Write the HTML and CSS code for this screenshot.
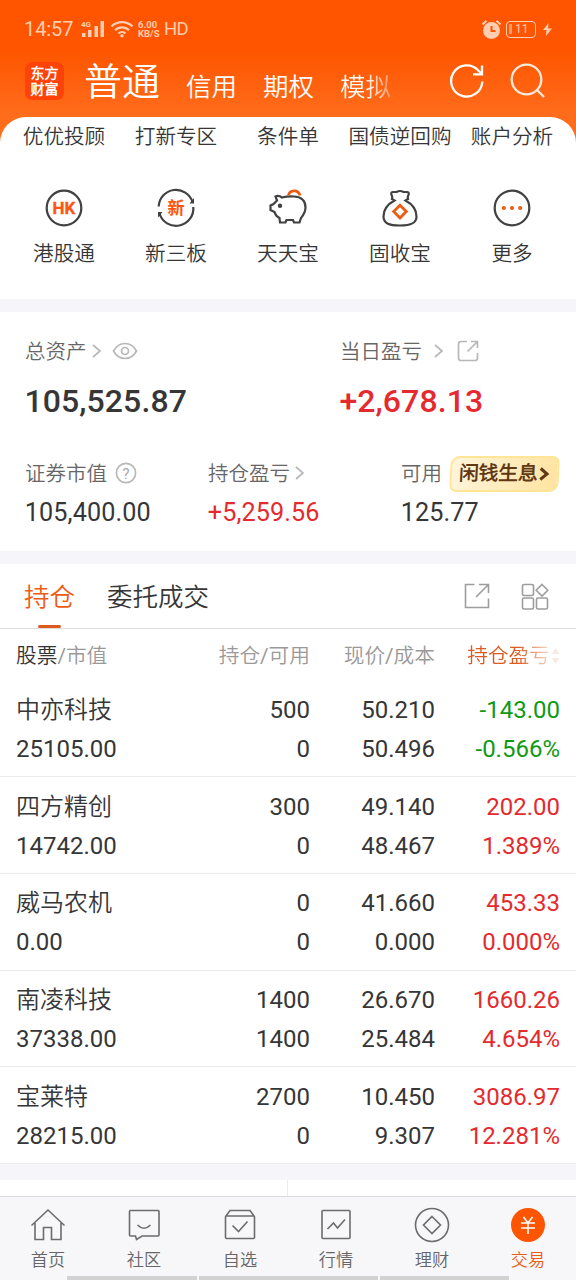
FILE: index.html
```html
<!DOCTYPE html>
<html lang="zh-CN">
<head>
<meta charset="utf-8">
<title>交易</title>
<link rel="stylesheet" href="styles.css">
</head>
<body>
<div class="app">
  <header class="top">
    <div class="status">
      <span class="time">14:57</span>
      <svg class="signal" width="24" height="18" viewBox="0 0 24 18"><text x="0" y="7" class="sig-text">4G</text><path d="M1 13h3.500v4H1zM7 10h3.500v7H7zM13.500 6H17v11h-3.500zM19.500 1H23v16h-3.500z"/></svg>
      <svg class="wifi" width="24" height="18" viewBox="0 0 24 18"><path d="M1.500 6.500a15 15 0 0 1 21 0M5 10.200a10 10 0 0 1 14 0M8.500 13.500a5 5 0 0 1 7 0"/><circle cx="12" cy="15.800" r="1.700"/></svg>
      <span class="speed"><b>6.00</b><b>KB/S</b></span>
      <span class="hd">HD</span>
      <svg class="alarm" width="21" height="21" viewBox="0 0 21 21"><circle cx="10.500" cy="11.500" r="8.500"/><path d="M1.500 5.500 5.500 1.800M19.500 5.500 15.500 1.800" class="ear"/><path d="M10.500 7v5h4" class="hand"/></svg>
      <span class="battery"><i></i>11</span>
      <svg class="bolt" width="9" height="13" viewBox="0 0 9 13"><path d="M5.500 0 0 7h3.500L3 13l6-7.500H5z"/></svg>
    </div>
    <nav class="accounts">
      <span class="logo"><span>东方</span><span>财富</span></span>
      <span class="acct current">普通</span>
      <span class="acct">信用</span>
      <span class="acct">期权</span>
      <span class="acct faded">模拟</span>
      <svg class="refresh" width="36" height="36" viewBox="0 0 36 36"><path d="M33.300 18.500A15.600 15.600 0 1 1 29.300 7.500L33 11M33 2.500V11.300H24"/></svg>
      <svg class="search" width="36" height="36" viewBox="0 0 36 36"><circle cx="16.500" cy="16.500" r="14.800"/><path d="m27 27 7 7"/></svg>
    </nav>
  </header>

  <section class="shortcuts">
    <span class="link">优优投顾</span><span class="link">打新专区</span><span class="link">条件单</span><span class="link">国债逆回购</span><span class="link">账户分析</span>
    <div class="tool"><svg width="40" height="40" viewBox="0 0 40 40"><circle cx="20" cy="20" r="17.300"/><text x="20" y="26" class="hk">HK</text></svg><span>港股通</span></div>
    <div class="tool"><svg width="40" height="40" viewBox="0 0 40 40"><path d="M2.700 18.500A17.300 17.300 0 0 1 36.500 14M37.300 19A17.300 17.300 0 0 1 3.500 25.500"/><path class="tip" d="M38 10v5.500h-4.500zM2 29.500V24h4.500z"/><text x="20" y="26.200" class="xin">新</text></svg><span>新三板</span></div>
    <div class="tool"><svg width="40" height="40" viewBox="0 0 40 40"><path d="M9 12.500 7.500 8.500q3-1.500 6.500 1 5-1.300 12-1c8 .5 11.500 5 11.500 11 0 5-2.500 8-4.500 10.500l-1.500 4.500h-5.500l-1-2.500h-6.500l-1 2.500H12l-.5-4.500q-4-2-5-6L2.500 22v-4.500L5.500 16z"/><circle class="eye" cx="12" cy="17.800" r="2.200"/><path class="coin" d="M20.500 7.500c.8-6 10-6.500 11.500 0"/></svg><span>天天宝</span></div>
    <div class="tool"><svg width="40" height="40" viewBox="0 0 40 40"><path d="M14.500 12.500l-2.500-1.500q.8-2-.8-5 0-2 1.800-2h3.500q3.500-2 7 0H27q1.800 0 1.800 2-1.600 3-.8 5l-2.500 1.500c6.500 3.500 11 9 11 16 0 6.500-5 9-16.500 9s-16.500-2.500-16.500-9c0-7 4.500-12.500 11-16z"/><path class="coin" d="m20 17.300 6.300 6.300-6.300 6.300-6.300-6.300z"/></svg><span>固收宝</span></div>
    <div class="tool"><svg width="40" height="40" viewBox="0 0 40 40"><circle cx="20" cy="20" r="17.300"/><g class="dots"><circle cx="11.800" cy="20" r="2.100"/><circle cx="20" cy="20" r="2.100"/><circle cx="28.200" cy="20" r="2.100"/></g></svg><span>更多</span></div>
  </section>

  <section class="assets">
    <div class="totals">
      <div class="cell">
        <div class="label">总资产<svg class="arrow" width="9" height="14" viewBox="0 0 9 14"><path d="m1 1 7 6-7 6"/></svg><svg class="eyeicon" width="26" height="18" viewBox="0 0 26 18"><path d="M1.500 9C7-1 19-1 24.500 9 19 19 7 19 1.500 9z"/><circle cx="13" cy="9" r="3.500"/></svg></div>
        <div class="big">105,525.87</div>
      </div>
      <div class="cell">
        <div class="label">当日盈亏<svg class="arrow wide" width="9" height="14" viewBox="0 0 9 14"><path d="m1 1 7 6-7 6"/></svg><svg class="share" width="22" height="22" viewBox="0 0 22 22"><path d="M10 1.500H4Q1.500 1.500 1.500 4v14q0 2.500 2.500 2.500h14q2.500 0 2.500-2.500v-5M14 1.500h6.500V8M20 2l-9.500 9.500"/></svg></div>
        <div class="big up">+2,678.13</div>
      </div>
    </div>
    <div class="details">
      <div class="cell">
        <div class="label">证券市值<svg class="help" width="22" height="22" viewBox="0 0 22 22"><circle cx="11" cy="11" r="9.600"/><text x="11" y="16.500">?</text></svg></div>
        <div class="mid">105,400.00</div>
      </div>
      <div class="cell">
        <div class="label">持仓盈亏<svg class="arrow" width="9" height="14" viewBox="0 0 9 14"><path d="m1 1 7 6-7 6"/></svg></div>
        <div class="mid up">+5,259.56</div>
      </div>
      <div class="cell">
        <div class="label">可用<span class="promo"><span>闲钱生息</span><svg width="10" height="14" viewBox="0 0 10 14"><path d="m1.500 1.500 6.500 5.500-6.500 5.500"/></svg></span></div>
        <div class="mid">125.77</div>
      </div>
    </div>
  </section>

  <section class="positions">
    <div class="tabs">
      <span class="tab on">持仓</span><span class="tab">委托成交</span>
      <svg class="out" width="26" height="26" viewBox="0 0 26 26"><path d="M10.500 1.500h-9v23h23v-9M15 1.500h9.500V10M24 2 12 14"/></svg>
      <svg class="grid" width="28" height="28" viewBox="0 0 28 28"><rect x="1.500" y="1.500" width="11" height="11" rx="1.500"/><rect x="1.500" y="15" width="11" height="11" rx="1.500"/><rect x="15.500" y="15" width="11" height="11" rx="1.500"/><path d="m21 1.500 5.800 5.800-5.800 5.800-5.800-5.800z"/></svg>
    </div>
    <div class="row head"><span><em>股票</em>/市值</span><span>持仓/可用</span><span>现价/成本</span><span class="sorted">持仓盈亏<svg width="9" height="18" viewBox="0 0 9 18"><path d="M4.500 1 8 7H1zM4.500 17 8 11H1z"/></svg></span></div>
    <div class="row"><span>中亦科技</span><span>500</span><span>50.210</span><span class="down">-143.00</span><span>25105.00</span><span>0</span><span>50.496</span><span class="down">-0.566%</span></div>
    <div class="row"><span>四方精创</span><span>300</span><span>49.140</span><span class="up">202.00</span><span>14742.00</span><span>0</span><span>48.467</span><span class="up">1.389%</span></div>
    <div class="row"><span>威马农机</span><span>0</span><span>41.660</span><span class="up">453.33</span><span>0.00</span><span>0</span><span>0.000</span><span class="up">0.000%</span></div>
    <div class="row"><span>南凌科技</span><span>1400</span><span>26.670</span><span class="up">1660.26</span><span>37338.00</span><span>1400</span><span>25.484</span><span class="up">4.654%</span></div>
    <div class="row"><span>宝莱特</span><span>2700</span><span>10.450</span><span class="up">3086.97</span><span>28215.00</span><span>0</span><span>9.307</span><span class="up">12.281%</span></div>
  </section>
  <div class="peek"><i></i><i></i></div>

  <footer class="bottom">
    <div class="item"><svg width="36" height="36" viewBox="0 0 36 36"><path d="M1.500 18.500 18 3l16.500 15.500M5 16v16.500h8.500V20.500h8v12H31V16"/></svg><span>首页</span></div>
    <div class="item"><svg width="36" height="36" viewBox="0 0 36 36"><path d="M4 3.500h28q1 0 1 1V28q0 1-1 1H16l-5.500 3.500-1-3.500H4.500q-1 0-1-1V4.500q0-1 1-1zM11.500 18q6.500 6.500 13 0"/></svg><span>社区</span></div>
    <div class="item"><svg width="36" height="36" viewBox="0 0 36 36"><path d="M4 9 8 3.500h20L32 9M4 9h28q.5 0 .5 1v20.500q0 1-1 1h-27q-1 0-1-1V10q0-1 .5-1zM10.500 18.500l6 6 9-10"/></svg><span>自选</span></div>
    <div class="item"><svg width="36" height="36" viewBox="0 0 36 36"><rect x="4" y="3.500" width="28" height="28" rx="1"/><path d="m9.500 22 6-6 4 5 7.500-8.500"/></svg><span>行情</span></div>
    <div class="item"><svg width="36" height="36" viewBox="0 0 36 36"><circle cx="18" cy="18" r="16.500"/><path d="m18 9.500 8.500 8.500-8.500 8.500L9.500 18z"/></svg><span>理财</span></div>
    <div class="item active"><svg width="36" height="36" viewBox="0 0 36 36"><circle cx="18" cy="18" r="17"/><path d="m13.500 10 4.500 6 4.500-6M11 16h14M11 21h14M18 16v11"/></svg><span>交易</span></div>
    <div class="scroll"><i></i><i></i><i></i></div>
  </footer>
</div>
</body>
</html>
```
FILE: styles.css
```css
* { box-sizing: border-box; }
body { margin: 0; background: #f6f6fa; }
.app {
  width: 576px; height: 1280px; overflow: hidden;
  display: flex; flex-direction: column;
  font-family: Roboto, "Noto Sans CJK SC DemiLight", "Noto Sans CJK SC Light", "Noto Sans CJK SC", sans-serif;
  font-weight: 400; color: #363636; white-space: nowrap;
}
svg { display: block; flex: none; fill: none; overflow: visible; }
i { font-style: normal; }

.top {
  flex: none; height: 143px; margin-bottom: -26px;
  background: linear-gradient(#ff5500 0, #ff5500 50px, #ff6d1c 117px);
  color: #fff;
}
.status {
  height: 58px; padding: 0 24px; display: flex; align-items: center;
  color: #ffcdb0; font-size: 20px;
}
.time { letter-spacing: -.1px; width: 57px; }
.signal, .bolt { fill: #ffcdb0; }
.sig-text { font: 700 8px Roboto, sans-serif; }
.wifi { margin-left: 5px; stroke: #ffcdb0; stroke-width: 2.300; }
.wifi circle { fill: #ffcdb0; stroke: none; }
.speed { margin-left: 4px; width: 26px; font-size: 9.500px; line-height: 9.500px; display: flex; flex-direction: column; }
.speed b { font-weight: 700; }
.hd { font-size: 18.500px; letter-spacing: -.8px; }
.alarm { margin-left: auto; fill: #ffcdb0; }
.ear { stroke: #ffcdb0; stroke-width: 2; }
.hand { stroke: #ff5500; stroke-width: 2; fill: none; }
.battery {
  margin-left: 4px; width: 30px; height: 17px; border: 1.500px solid #ffcdb0; border-radius: 4px;
  font-size: 12px; line-height: 15px; display: flex; gap: 3px;
}
.battery i { width: 3px; height: 10px; margin: 2px 0 0 2px; background: #ff9a66; }
.bolt { margin-left: 7px; }

.accounts { height: 59px; padding: 0 30px 0 25px; display: flex; }
.logo {
  width: 39px; height: 38px; margin-top: 4px; border-radius: 7px; background: #ff4308;
  display: flex; flex-direction: column; align-items: center; justify-content: center;
  font-size: 14px; font-weight: 700; line-height: 16px;
}
.acct { font-size: 25.500px; line-height: 38px; margin: 9.500px 0 0 26px; }
.acct.current { font-size: 38px; line-height: 40px; margin: 3.500px 0 0 20px; }
.faded { background: linear-gradient(90deg, #fff 50%, rgba(255,255,255,.35)); -webkit-background-clip: text; color: transparent; }
.refresh { margin: 5px 0 0 auto; stroke: #fff; stroke-width: 2.300; }
.search { margin: 5px 0 0 25px; stroke: #ffeade; stroke-width: 2.300; }

.shortcuts {
  flex: none; height: 182px; padding: 5px 8px 0; background: #fff; border-radius: 26px 26px 0 0;
  display: grid; grid-template-columns: repeat(5, 112px); grid-template-rows: 32px 1fr;
  text-align: center; font-size: 20.600px; line-height: 30px;
}
.link { display: flex; justify-content: center; }
.tool { display: flex; flex-direction: column; align-items: center; padding-top: 34px; }
.tool svg { stroke: #414141; stroke-width: 2.200; }
.tool span { margin-top: 11px; }
.tool text { fill: #ff5510; stroke: none; text-anchor: middle; font-family: Roboto, "Noto Sans CJK SC", sans-serif; font-weight: 700; }
.tool .hk { font-size: 17px; stroke: #ff5510; stroke-width: .3; }
.xin { font-size: 17px; }
.tool .tip, .tool .eye { fill: #414141; stroke: none; }
.tool .coin { stroke: #ec5b12; stroke-width: 2.800; }
.tool .dots { fill: #ec5b12; stroke: none; }

.assets { flex: none; height: 239px; margin-top: 13px; padding: 24px 0 0 25px; background: #fff; }
.totals { display: grid; grid-template-columns: 315px 1fr; height: 122px; }
.details { display: grid; grid-template-columns: 183px 193px 1fr; }
.label { height: 30px; padding-top: 1px; display: flex; align-items: center; font-size: 20.500px; line-height: 30px; color: #666; }
.label > svg { stroke: #b8b8b8; stroke-width: 1.700; margin-top: -2px; }
.label > .arrow { margin: -1px 0 0 5px; }
.label > .arrow.wide { margin-left: 12px; }
.eyeicon { margin-left: 11px; }
.share { margin-left: 14px; }
.help { margin-left: 8px; }
.help text { fill: #aaa; stroke: none; text-anchor: middle; font: 15.500px Roboto, sans-serif; }
.big { margin: 14.500px 0 0 -.6px; font-size: 32px; line-height: 40px; font-weight: 500; letter-spacing: .1px; }
.mid { margin: 7.500px 0 0 -.2px; font-size: 25.200px; line-height: 34px; letter-spacing: .1px; }
.up { color: #e42a2e; }
.down { color: #109a13; }
.promo {
  width: 109px; height: 36px; margin-left: 8px; padding-left: 7px; display: flex; align-items: center; gap: 1px;
  border: 2px solid #ffe596; border-radius: 9px 7px 9px 7px; background: linear-gradient(100deg, #fff5dc, #ffe3a0);
  color: #603813; font-size: 19.700px; font-weight: 700; transform: skewX(-3deg);
}
.promo svg { stroke: #603813; stroke-width: 3; }

.positions { flex: none; height: 599px; margin-top: 13px; background: #fff; }
.tabs { height: 65px; padding: 0 27px 0 24px; border-bottom: 1px solid #dedede; display: flex; font-size: 25.500px; line-height: 66px; }
.tab { margin-right: 32px; }
.tab.on { color: #ec5b12; display: flex; flex-direction: column; align-items: center; }
.tab.on::after { content: ""; width: 23px; height: 4px; margin-top: -5px; border-radius: 2px; background: #dc5b20; }
.out { margin: 19px 31px 0 auto; stroke: #9d9d9d; stroke-width: 1.600; }
.grid { margin-top: 19px; stroke: #9d9d9d; stroke-width: 1.600; }
.row {
  height: 96.800px; padding: 10.700px 16px 0; border-bottom: 1px solid #ececef;
  display: grid; grid-template-columns: 166px 128px 125px 125px; grid-auto-rows: 39px;
  font-size: 24px; line-height: 39px; text-align: right;
}
.row > span:nth-child(4n+1) { text-align: left; }
.row.head { height: 51.200px; padding-top: 8px; border: 0; font-size: 20.700px; line-height: 38px; color: #999; }
.head em { font-style: normal; color: #333; }
.row .sorted {
  display: flex; align-items: center; justify-content: flex-end; color: #dc5b20; line-height: 38px; height: 38px;
  -webkit-mask-image: linear-gradient(90deg, #000 66%, rgba(0,0,0,.15) 94%);
}
.sorted svg { fill: #dc5b20; margin-left: 1px; }
.peek { flex: none; height: 16px; margin-top: 17px; display: grid; grid-template-columns: 287px 1fr; gap: 1px; background: #ececef; }
.peek i { background: #fff; }

.bottom {
  flex: none; height: 84px; border-top: 1px solid #dcdcde; background: #f7f7fa;
  display: grid; grid-template-columns: repeat(6, 1fr); grid-template-rows: 79px 4px;
  font-size: 17.200px; line-height: 26px; color: #666;
}
.item { display: flex; flex-direction: column; align-items: center; padding-top: 10px; }
.item svg { stroke: #6c6c6c; stroke-width: 1.600; }
.item span { margin-top: 4px; }
.item.active { color: #ec5b12; }
.active svg { stroke: #fff; }
.active circle { fill: #ff5500; stroke: none; }
.scroll { grid-column: 1 / -1; padding: 0 67px; display: grid; grid-template-columns: 130px 179px 129px; gap: 2px; }
.scroll i { background: #d2d2d2; }
```
